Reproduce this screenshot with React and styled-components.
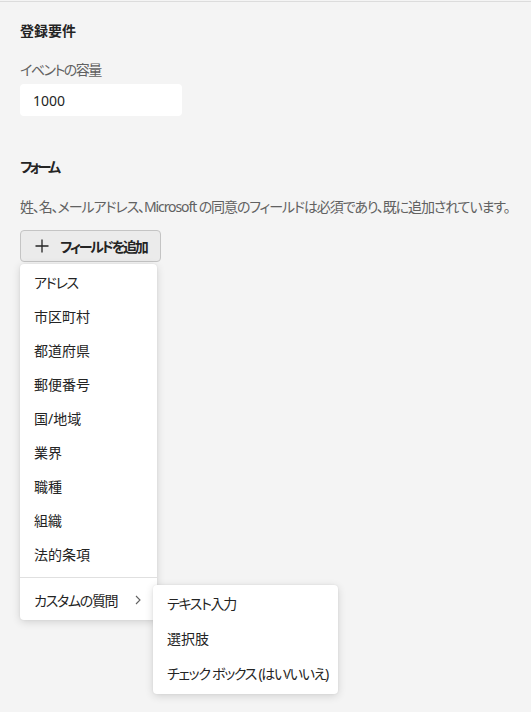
import React from "react";
import styled, { createGlobalStyle } from "styled-components";

const GlobalStyle = createGlobalStyle`
  html, body {
    min-height: 100%;
  }
  body {
    margin: 0;
    min-height: 100vh;
    background: #f4f4f4;
    font-family: "Noto Sans", "Noto Sans CJK JP", sans-serif;
    font-feature-settings: "palt";
    color: #242424;
  }
`;

const TopRule = styled.div`
  height: 1px;
  margin-top: 1px;
  background: #dcdcdc;
`;

const Page = styled.div`
  padding: 0 20px 40px;
  display: flex;
  flex-direction: column;
`;

const Heading = styled.h2`
  margin: ${(p) => p.$top}px 0 0;
  font-size: 14px;
  line-height: 20px;
  font-weight: 700;
  color: #242424;
  letter-spacing: ${(p) => p.$tight || 0}px;
`;

const Label = styled.div`
  margin-top: ${(p) => p.$top}px;
  font-size: 14px;
  line-height: 20px;
  color: #616161;
  white-space: nowrap;
  letter-spacing: ${(p) => p.$tight || 0}px;
`;

const Input = styled.div`
  margin-top: 4px;
  width: 162px;
  height: 32px;
  box-sizing: border-box;
  padding: 0 13px;
  display: flex;
  align-items: center;
  background: #fff;
  border-radius: 4px;
  font-size: 14px;
`;

const AddButton = styled.button`
  margin-top: 13px;
  align-self: flex-start;
  width: 141px;
  height: 32px;
  box-sizing: border-box;
  display: flex;
  align-items: center;
  gap: 11px;
  padding: 0 12px 0 14px;
  background: #ebebeb;
  border: 1px solid #c4c4c4;
  border-radius: 4px;
  font: inherit;
  font-size: 14px;
  font-weight: 600;
  letter-spacing: -2.2px;
  white-space: nowrap;
  color: #242424;

  svg {
    flex-shrink: 0;
  }
`;

const MenuArea = styled.div`
  position: relative;
  margin-top: 2px;
  padding-bottom: 80px;
`;

const Menu = styled.div`
  width: ${(p) => p.$width}px;
  box-sizing: border-box;
  padding: 1px 0 3px;
  background: #fff;
  border-radius: 4px;
  box-shadow: 0 2px 8px rgba(0, 0, 0, 0.14), 0 0 2px rgba(0, 0, 0, 0.08);
`;

const SubMenu = styled(Menu)`
  position: absolute;
  left: 133px;
  top: 321px;
  padding: 0 0 4px;
`;

const Item = styled.div`
  height: ${(p) => p.$h || 34}px;
  display: flex;
  align-items: center;
  justify-content: space-between;
  padding: 0 16px 0 14px;
  font-size: 14px;
  color: #242424;
  white-space: nowrap;
  letter-spacing: ${(p) => (p.$kana ? -1.3 : 0)}px;

  svg {
    flex-shrink: 0;
  }
`;

const Divider = styled.div`
  height: 1px;
  margin: 6px 0 5px;
  background: #e0e0e0;
`;

const PlusIcon = () => (
  <svg width="14" height="14" viewBox="0 0 14 14">
    <path d="M7 0.5v13M0.5 7h13" stroke="#242424" strokeWidth="1.3" fill="none" />
  </svg>
);

const Chevron = () => (
  <svg width="6" height="10" viewBox="0 0 6 10">
    <path d="M1 1l4 4-4 4" stroke="#616161" strokeWidth="1.1" fill="none" />
  </svg>
);

const fields = [
  { label: "アドレス", kana: true },
  { label: "市区町村" },
  { label: "都道府県" },
  { label: "郵便番号" },
  { label: "国/地域" },
  { label: "業界" },
  { label: "職種" },
  { label: "組織" },
  { label: "法的条項" },
];

const custom = [
  { label: "テキスト入力", kana: true },
  { label: "選択肢" },
  { label: "チェック ボックス (はい/いいえ)", kana: true },
];

export default function App() {
  return (
    <>
      <GlobalStyle />
      <TopRule />
      <Page>
        <Heading $top={19}>登録要件</Heading>
        <Label $top={19} $tight={-1.5}>
          イベントの容量
        </Label>
        <Input>1000</Input>
        <Heading $top={41} $tight={-3}>
          フォーム
        </Heading>
        <Label $top={20} $tight={-1.1}>
          姓、名、メールアドレス、Microsoft の同意のフィールドは必須であり、既に追加されています。
        </Label>
        <AddButton>
          <PlusIcon />
          フィールドを追加
        </AddButton>
        <MenuArea>
          <Menu $width={137}>
            {fields.map((f) => (
              <Item key={f.label} $kana={f.kana}>
                {f.label}
              </Item>
            ))}
            <Divider />
            <Item $kana>
              カスタムの質問
              <Chevron />
            </Item>
          </Menu>
          <SubMenu $width={185}>
            {custom.map((c) => (
              <Item key={c.label} $h={35} $kana={c.kana}>
                {c.label}
              </Item>
            ))}
          </SubMenu>
        </MenuArea>
      </Page>
    </>
  );
}
